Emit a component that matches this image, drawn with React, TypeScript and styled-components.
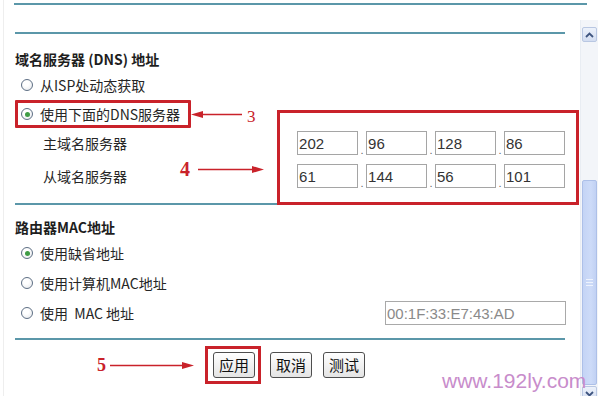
import React from "react";
import styled, { createGlobalStyle } from "styled-components";

const Global = createGlobalStyle`
  html, body {
    margin: 0;
    padding: 0;
    width: 600px;
    height: 396px;
    overflow: hidden;
    background: #ffffff;
  }
  body {
    font-family: "Noto Sans CJK SC", "Noto Sans", sans-serif;
    color: #262626;
  }
`;

const RED = "#c9222a";
const RULE = "#5b97a9";

const Page = styled.div`
  position: relative;
  display: flex;
  width: 600px;
  height: 396px;
  overflow: hidden;
  background: #fff;
`;

const Main = styled.div`
  display: flex;
  flex-direction: column;
  box-sizing: border-box;
  width: 575px;
  margin-left: 3px;
  padding-left: 11px;
  padding-right: 13px;
  border-left: 1px solid #eeeeee;
`;

const Rule = styled.div<{ $w: number; $top: number; $shift?: number }>`
  flex: none;
  width: ${(p) => p.$w}px;
  height: 2px;
  margin-top: ${(p) => p.$top}px;
  margin-left: ${(p) => p.$shift ?? 0}px;
  background: ${RULE};
`;

const SectionTitle = styled.div<{ $top: number; $h: number }>`
  display: flex;
  align-items: center;
  height: ${(p) => p.$h}px;
  margin-top: ${(p) => p.$top}px;
  font-size: 14px;
  font-weight: 700;
  color: #1e1e1e;
  white-space: pre;
`;

const OptionRow = styled.div<{ $h: number }>`
  display: flex;
  align-items: center;
  height: ${(p) => p.$h}px;
  padding-left: 6px;
`;

const HighlightRow = styled.div`
  display: flex;
  align-items: center;
  height: 32px;
`;

const Highlight = styled.div`
  display: inline-flex;
  align-items: center;
  box-sizing: border-box;
  height: 28px;
  padding: 0 8px 0 3px;
  border: 3px solid ${RED};
  border-radius: 1px;
`;

const Option = styled.label`
  display: inline-flex;
  align-items: center;
  gap: 7px;
  font-size: 14px;
  color: #262626;
  white-space: pre;
`;

const Radio = styled.span<{ $on?: boolean }>`
  position: relative;
  display: inline-block;
  box-sizing: border-box;
  width: 12px;
  height: 12px;
  border-radius: 50%;
  border: 1px solid #5e6f84;
  background: radial-gradient(circle at 40% 35%, #ffffff 30%, #e3e6ea 100%);
  &::after {
    content: "";
    display: ${(p) => (p.$on ? "block" : "none")};
    position: absolute;
    left: 2.5px;
    top: 2.5px;
    width: 5px;
    height: 5px;
    border-radius: 50%;
    background: #3f9c45;
  }
`;

const Pointer = styled.svg`
  flex: none;
  display: block;
`;

const Mark = styled.span<{ $size: number; $bold?: boolean }>`
  font-family: "Liberation Serif", "DejaVu Serif", serif;
  font-size: ${(p) => p.$size}px;
  font-weight: ${(p) => (p.$bold ? 700 : 400)};
  color: ${RED};
  line-height: 1;
`;

const DnsBlock = styled.div`
  position: relative;
  display: flex;
  flex-direction: column;
  gap: 9px;
  padding-top: 1px;
`;

const RedFrame = styled.div`
  position: absolute;
  left: 262px;
  top: -20px;
  width: 302px;
  height: 95px;
  box-sizing: border-box;
  border: 3px solid ${RED};
  pointer-events: none;
`;

const ServerRow = styled.div`
  display: flex;
  align-items: center;
  height: 24px;
`;

const LabelCell = styled.div`
  display: flex;
  align-items: center;
  box-sizing: border-box;
  width: 283px;
  padding-left: 28px;
`;

const Label = styled.span`
  width: 137px;
  font-size: 14px;
  color: #262626;
`;

const Callout = styled.div`
  display: flex;
  align-items: center;
  gap: 8px;
  transform: translateY(-7px);
`;

const IpField = styled.input`
  box-sizing: border-box;
  width: 61px;
  height: 24px;
  margin: 0;
  padding: 1px 1px 0;
  border: 1px solid #a5a5a5;
  background: #fff;
  font-family: "Liberation Sans", Arial, sans-serif;
  font-size: 15px;
  color: #333;
  outline: none;
`;

const Dot = styled.span`
  width: 8px;
  align-self: flex-end;
  text-align: center;
  font-family: "Liberation Sans", Arial, sans-serif;
  font-size: 11px;
  line-height: 10px;
  color: #666;
`;

const MacField = styled(IpField)`
  width: 181px;
  margin-left: auto;
  margin-right: -1px;
  color: #8a8a8a;
  border-color: #a9a9a9;
`;

const ButtonRow = styled.div`
  display: flex;
  align-items: center;
  height: 38px;
  margin-top: 6px;
  padding-left: 82px;
`;

const ButtonFrame = styled.div`
  display: flex;
  align-items: center;
  box-sizing: border-box;
  height: 38px;
  margin-left: 11px;
  padding: 0 3px 0 5px;
  border: 3px solid ${RED};
`;

const Button = styled.button<{ $gap?: number }>`
  box-sizing: border-box;
  width: 42px;
  height: 26px;
  margin: 0 0 0 ${(p) => p.$gap ?? 0}px;
  padding: 0;
  border: 1px solid #4e4e4e;
  border-radius: 3px;
  background: linear-gradient(#ffffff, #e4e4e4);
  font-family: "Noto Sans CJK SC", sans-serif;
  font-size: 15px;
  line-height: 22px;
  color: #111;
`;

const Scrollbar = styled.div`
  display: flex;
  flex-direction: column;
  align-items: center;
  box-sizing: border-box;
  width: 18px;
  height: 376px;
  margin-top: 20px;
  margin-left: 2px;
  background: #f3f5f9;
  border-left: 1px solid #e9edf3;
`;

const ScrollButton = styled.div<{ $top: number }>`
  display: flex;
  align-items: center;
  justify-content: center;
  box-sizing: border-box;
  flex: none;
  width: 15px;
  height: 15px;
  margin-top: ${(p) => p.$top}px;
  border: 1px solid #b9c7e2;
  border-radius: 2px;
  background: linear-gradient(#edf2fb, #d3ddf1);
`;

const Thumb = styled.div`
  display: flex;
  align-items: center;
  justify-content: center;
  box-sizing: border-box;
  flex: none;
  width: 15px;
  height: 205px;
  margin-top: 138px;
  border: 1px solid #adc0e8;
  border-radius: 2px;
  background: linear-gradient(90deg, #c4d4f5, #cddbf8 60%, #c1d1f3);
`;

const Grip = styled.div`
  width: 7px;
  height: 7px;
  background: repeating-linear-gradient(
    #eef3fd 0 1px,
    transparent 1px 3px
  );
`;

const Watermark = styled.div`
  position: absolute;
  left: 442px;
  top: 370px;
  font-family: "Liberation Sans", Arial, sans-serif;
  font-size: 21px;
  line-height: 21px;
  color: #c88ccb;
  white-space: nowrap;
`;

const ArrowLeft = ({ w }: { w: number }) => (
  <Pointer width={w} height={9} viewBox={`0 0 ${w} 9`}>
    <line x1={8} y1={4.5} x2={w} y2={4.5} stroke={RED} strokeWidth={1.3} />
    <polygon points={`0,4.5 12,1 12,8`} fill={RED} />
  </Pointer>
);

const ArrowRight = ({ w }: { w: number }) => (
  <Pointer width={w} height={9} viewBox={`0 0 ${w} 9`}>
    <line x1={0} y1={4.5} x2={w - 8} y2={4.5} stroke={RED} strokeWidth={1.3} />
    <polygon points={`${w},4.5 ${w - 12},1 ${w - 12},8`} fill={RED} />
  </Pointer>
);

const primary = ["202", "96", "128", "86"];
const secondary = ["61", "144", "56", "101"];

const IpGroup = ({ parts }: { parts: string[] }) => (
  <>
    {parts.map((v, i) => (
      <React.Fragment key={i}>
        {i > 0 && <Dot>.</Dot>}
        <IpField defaultValue={v} readOnly />
      </React.Fragment>
    ))}
  </>
);

export default function App() {
  return (
    <Page>
      <Global />
      <Main>
        <Rule $w={573} $top={3} $shift={-1} />
        <Rule $w={550} $top={27} />
        <SectionTitle $top={12} $h={26}>域名服务器 (DNS) 地址</SectionTitle>
        <OptionRow $h={26}>
          <Option>
            <Radio />
            从ISP处动态获取
          </Option>
        </OptionRow>
        <HighlightRow>
          <Highlight>
            <Option>
              <Radio $on />
              使用下面的DNS服务器
            </Option>
          </Highlight>
          <ArrowLeft w={51} />
          <Mark $size={17} style={{ marginLeft: 5, marginTop: 4 }}>3</Mark>
        </HighlightRow>
        <DnsBlock>
          <ServerRow>
            <LabelCell>
              <Label>主域名服务器</Label>
            </LabelCell>
            <IpGroup parts={primary} />
          </ServerRow>
          <ServerRow>
            <LabelCell>
              <Label>从域名服务器</Label>
              <Callout>
                <Mark $size={20} $bold>4</Mark>
                <ArrowRight w={66} />
              </Callout>
            </LabelCell>
            <IpGroup parts={secondary} />
          </ServerRow>
          <RedFrame />
        </DnsBlock>
        <Rule $w={550} $top={15} />
        <SectionTitle $top={11} $h={22}>路由器MAC地址</SectionTitle>
        <OptionRow $h={30}>
          <Option>
            <Radio $on />
            使用缺省地址
          </Option>
        </OptionRow>
        <OptionRow $h={30}>
          <Option>
            <Radio />
            使用计算机MAC地址
          </Option>
        </OptionRow>
        <OptionRow $h={30}>
          <Option>
            <Radio />
            使用  MAC 地址
          </Option>
          <MacField defaultValue="00:1F:33:E7:43:AD" readOnly />
        </OptionRow>
        <Rule $w={550} $top={10} />
        <ButtonRow>
          <Mark $size={18} $bold>5</Mark>
          <span style={{ marginLeft: 4 }} />
          <ArrowRight w={84} />
          <ButtonFrame>
            <Button>应用</Button>
          </ButtonFrame>
          <Button $gap={9}>取消</Button>
          <Button $gap={11}>测试</Button>
        </ButtonRow>
      </Main>
      <Scrollbar>
        <ScrollButton $top={7}>
          <svg width="9" height="6" viewBox="0 0 9 6">
            <polyline points="1,5 4.5,1.5 8,5" fill="none" stroke="#3f5580" strokeWidth="1.8" />
          </svg>
        </ScrollButton>
        <Thumb>
          <Grip />
        </Thumb>
        <ScrollButton $top={1}>
          <svg width="9" height="6" viewBox="0 0 9 6">
            <polyline points="1,1 4.5,4.5 8,1" fill="none" stroke="#3f5580" strokeWidth="1.8" />
          </svg>
        </ScrollButton>
      </Scrollbar>
      <Watermark>www.192ly.com</Watermark>
    </Page>
  );
}
